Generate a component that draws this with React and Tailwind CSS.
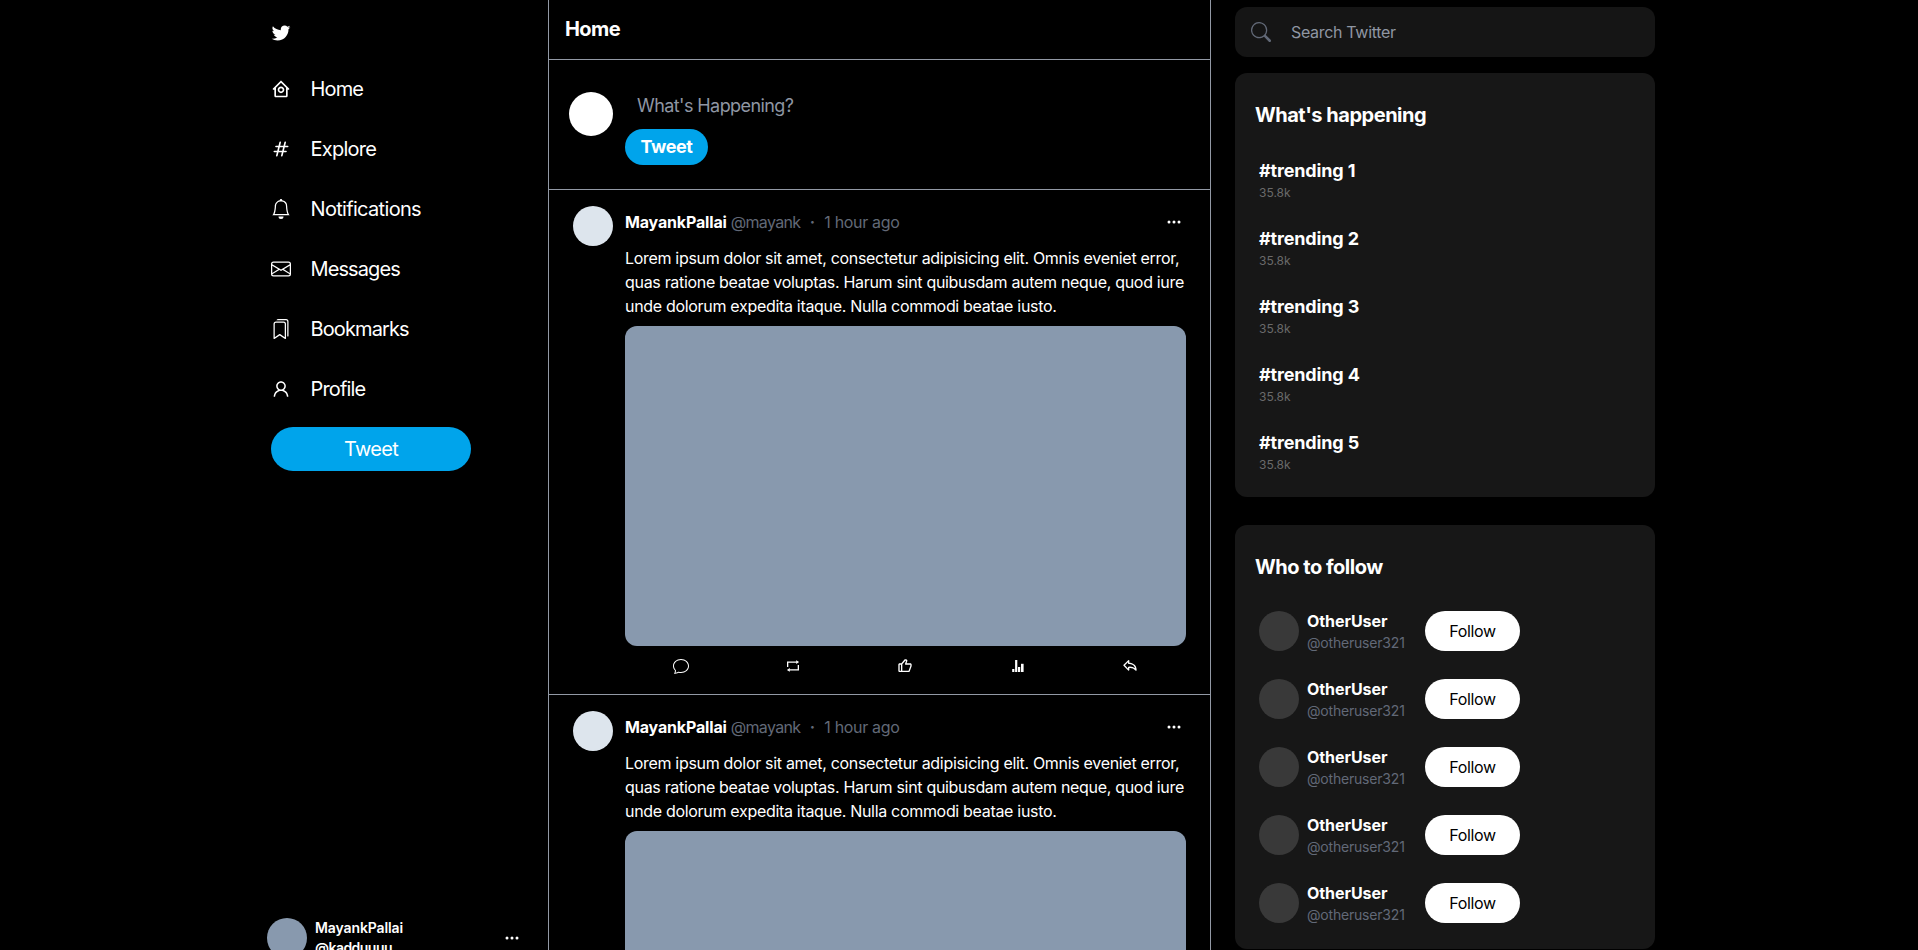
import { AiOutlineUser } from "react-icons/ai";
import { BiHomeCircle, BiLike, BiShare } from "react-icons/bi";
import { BsBell, BsEnvelope, BsBookmarks, BsChat, BsSearch, BsThreeDots } from "react-icons/bs";
import { HiOutlineHashtag } from "react-icons/hi";
import { IoLogoTwitter } from "react-icons/io5";

const NAV = [
  { label: "Home", Icon: BiHomeCircle, tracking: "tracking-[-0.042em]" },
  { label: "Explore", Icon: HiOutlineHashtag, tracking: "tracking-[-0.038em]" },
  { label: "Notifications", Icon: BsBell, tracking: "tracking-[-0.034em]" },
  { label: "Messages", Icon: BsEnvelope, tracking: "tracking-[-0.045em]" },
  { label: "Bookmarks", Icon: BsBookmarks, tracking: "tracking-[-0.044em]" },
  { label: "Profile", Icon: AiOutlineUser, tracking: "tracking-[-0.042em]" },
];

const TRENDS = [1, 2, 3, 4, 5];

function BarsIcon({ className }) {
  return (
    <svg viewBox="0 0 16 16" fill="currentColor" className={className}>
      <rect x="2.2" y="11" width="2.2" height="3" />
      <rect x="5.1" y="2" width="2.2" height="12" />
      <rect x="8" y="9" width="2.2" height="5" />
      <rect x="11" y="5.8" width="2.6" height="8.2" />
    </svg>
  );
}

function RetweetIcon({ className }) {
  return (
    <svg viewBox="0 0 16 16" fill="none" stroke="currentColor" strokeWidth="1.3" className={className}>
      <path d="M2.65 9V4.1h9M13.35 7v4.9h-9" />
      <path d="M11.2 2.2v3.8l2.9-1.9zM4.8 10v3.8l-2.9-1.9z" fill="currentColor" stroke="none" />
    </svg>
  );
}

const ACTIONS = [BsChat, RetweetIcon, BiLike, BarsIcon, BiShare];

function Sidebar() {
  return (
    <aside className="flex w-[548px] shrink-0 flex-col pl-[267px]">
      <div className="h-[59px] shrink-0 pt-[23px] pl-1">
        <IoLogoTwitter className="h-5 w-5" />
      </div>
      <nav>
        {NAV.map(({ label, Icon, tracking }) => (
          <a key={label} className="flex h-[60px] items-center gap-[19.5px] pl-1 text-xl">
            <Icon className="h-5 w-5" />
            <span className={tracking}>{label}</span>
          </a>
        ))}
      </nav>
      <button className="mt-2 ml-1 h-11 w-[200px] shrink-0 rounded-full bg-[#00a4eb] text-xl tracking-[-0.036em]">
        Tweet
      </button>
      <div className="mt-[447px] flex h-10 w-[253px] shrink-0 items-center">
        <div className="h-10 w-10 rounded-full bg-[#8899ae]" />
        <div className="ml-2 flex-1 text-sm font-semibold">
          <p className="tracking-[-0.008em]">MayankPallai</p>
          <p className="tracking-[-0.038em]">@kadduuuu</p>
        </div>
        <BsThreeDots className="h-4 w-4" />
      </div>
    </aside>
  );
}

function Composer() {
  return (
    <section className="flex h-[130px] shrink-0 border-b border-[#9299a5] pt-8 pl-5">
      <div className="h-11 w-11 rounded-full bg-white" />
      <div className="ml-3 flex flex-col items-start">
        <input
          className="h-7 w-[480px] bg-transparent px-3 text-lg tracking-[-0.032em] placeholder:text-[#8f96a3]"
          placeholder="What's Happening?"
        />
        <button className="mt-[9px] h-9 w-[83px] rounded-full bg-[#00a4eb] text-lg font-bold tracking-[-0.02em]">
          Tweet
        </button>
      </div>
    </section>
  );
}

function Tweet() {
  return (
    <article className="flex h-[505px] shrink-0 border-b border-[#9299a5] px-6 pt-4">
      <div className="h-10 w-10 shrink-0 rounded-full bg-[#dde5ed]" />
      <div className="ml-3 flex min-w-0 flex-1 flex-col">
        <div className="flex h-8 items-center pr-1 text-[#626977]">
          <span className="font-bold tracking-[-0.01em] text-white">MayankPallai</span>
          <span className="ml-1 tracking-[-0.043em]">@mayank</span>
          <span className="w-6 text-center font-bold">·</span>
          <span className="tracking-[-0.02em]">1 hour ago</span>
          <BsThreeDots className="ml-auto h-4 w-4 text-white" />
        </div>
        <p className="mt-2 text-base tracking-[-0.0195em]">
          Lorem ipsum dolor sit amet, consectetur adipisicing elit. Omnis eveniet error, quas ratione
          beatae voluptas. Harum sint quibusdam autem neque, quod iure unde dolorum expedita itaque.
          Nulla commodi beatae iusto.
        </p>
        <div className="mt-2 h-80 shrink-0 rounded-xl bg-[#8899ae]" />
        <div className="mt-3 flex justify-around">
          {ACTIONS.map((Icon, i) => (
            <Icon key={i} className="h-4 w-4" />
          ))}
        </div>
      </div>
    </article>
  );
}

function Card({ title, children }) {
  return (
    <section className="shrink-0 rounded-xl bg-[#171717] pt-7 pb-3">
      <h2 className="mb-4 pl-5 text-xl font-bold tracking-[-0.024em]">{title}</h2>
      {children}
    </section>
  );
}

export default function App() {
  return (
    <div className="flex h-[950px] overflow-hidden bg-black font-['Inter',sans-serif] text-white">
      <Sidebar />
      <main className="flex w-[663px] shrink-0 flex-col overflow-hidden border-x border-[#9299a5]">
        <h1 className="h-[60px] shrink-0 border-b border-[#9299a5] pt-[15px] pl-4 text-xl font-bold tracking-[-0.03em]">
          Home
        </h1>
        <Composer />
        <Tweet />
        <Tweet />
      </main>
      <aside className="ml-6 flex w-[420px] shrink-0 flex-col pt-[7px]">
        <label className="mb-4 flex h-[50px] shrink-0 items-center rounded-xl bg-[#151515] pl-4">
          <BsSearch className="h-5 w-5 text-[#626977]" />
          <input
            className="ml-2 bg-transparent px-3 tracking-[-0.02em] placeholder:text-[#8f96a3]"
            placeholder="Search Twitter"
          />
        </label>
        <Card title="What's happening">
          {TRENDS.map((n) => (
            <div key={n} className="h-[68px] py-3 pl-6">
              <p className="text-lg leading-7 font-bold tracking-[-0.008em]">#trending {n}</p>
              <p className="text-xs text-[#6a6a6a]">35.8k</p>
            </div>
          ))}
        </Card>
        <div className="h-7 shrink-0" />
        <Card title="Who to follow">
          {TRENDS.map((n) => (
            <div key={n} className="flex h-[68px] items-center pl-6">
              <div className="h-10 w-10 rounded-full bg-[#393939]" />
              <div className="ml-2 w-[118px]">
                <p className="text-base font-bold tracking-[-0.004em]">OtherUser</p>
                <p className="text-sm tracking-[-0.014em] text-[#626977]">@otheruser321</p>
              </div>
              <button className="h-10 w-[95px] rounded-full bg-white text-base tracking-[-0.02em] text-black">
                Follow
              </button>
            </div>
          ))}
        </Card>
      </aside>
    </div>
  );
}
